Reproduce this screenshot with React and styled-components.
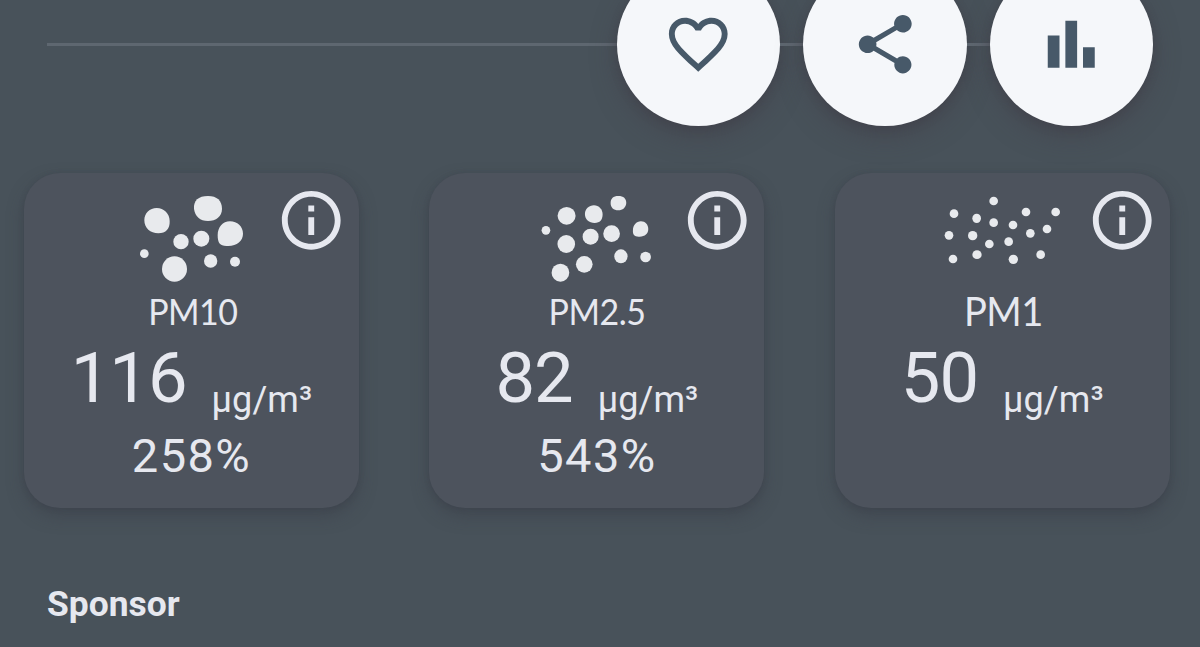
import { createGlobalStyle, styled } from 'styled-components'
import { MdFavoriteBorder, MdShare, MdBarChart, MdOutlineInfo } from 'react-icons/md'

const colors = {
  background: '#48525a',
  card: '#4d535d',
  text: '#e6e8ef',
  particle: '#e8eaed',
  line: '#5e6770',
  button: '#f5f7fa',
  buttonIcon: '#475969'
}

const GlobalStyle = createGlobalStyle`
  * {
    box-sizing: border-box;
  }
  body {
    margin: 0;
    background-color: ${colors.background};
    color: ${colors.text};
    font-family: Roboto, sans-serif;
  }
`

const StyledPage = styled.main`
  width: 1200px;
  height: 647px;
  overflow: hidden;
`

const ActionBar = styled.div`
  display: flex;
  align-items: center;
  height: 163px;
  margin-top: -37px;
  padding: 0 47px;
`

const Line = styled.div`
  flex: ${props => props.$width ? `0 0 ${props.$width}px` : 1};
  height: 3px;
  margin-bottom: 1px;
  background-color: ${colors.line};
`

const RoundButton = styled.button`
  display: flex;
  flex: none;
  align-items: center;
  justify-content: center;
  width: 163.5px;
  height: 163.5px;
  padding: 0;
  border: none;
  border-radius: 50%;
  background-color: ${colors.button};
  color: ${colors.buttonIcon};
  font-size: 70.5px;
  box-shadow: 0 10px 24px rgba(66, 62, 72, 0.5), 0 3px 8px rgba(60, 60, 68, 0.4);
`

const CardList = styled.div`
  display: flex;
  gap: 70.4px;
  padding: 47px 24px 0;
`

const Card = styled.section`
  flex: 0 0 335px;
  height: 335px;
  border-radius: 36px;
  background-color: ${colors.card};
  text-align: center;
  box-shadow: 0 8px 16px rgba(58, 62, 72, 0.5), 0 1px 5px rgba(58, 62, 72, 0.4);
`

const CardHeader = styled.div`
  display: flex;
  justify-content: flex-end;
  gap: 10.5px;
  height: 115px;
  padding: 12px 12.4px 0 0;
`

const ParticleBox = styled.svg`
  width: 136px;
  height: 100px;
  margin-top: 5px;
  fill: ${colors.particle};
`

const InfoIcon = styled(MdOutlineInfo)`
  width: 70.5px;
  height: 70.5px;
  color: ${colors.text};
`

const Name = styled.div`
  height: 45px;
  padding-left: ${props => props.$shift || 0}px;
  font-family: Lato, sans-serif;
  font-size: ${props => props.$large ? 41 : 37.5}px;
  line-height: 45px;
  letter-spacing: -0.5px;
  transform: scaleX(${props => props.$large ? 0.93 : 0.905});
`

const Reading = styled.div`
  display: flex;
  align-items: baseline;
  justify-content: center;
  height: 95px;
  line-height: 91px;
`

const Value = styled.span`
  font-size: 70.5px;
  letter-spacing: -1px;
`

const Unit = styled.span`
  margin-left: 25px;
  font-size: 36px;
  letter-spacing: 0.1px;
  transform: translateY(10px);
`

const Percent = styled.div`
  height: 56px;
  font-size: 47px;
  line-height: 56px;
  letter-spacing: 1.4px;
`

const SponsorTitle = styled.h2`
  margin: 74.5px 0 0 47px;
  font-size: 35.4px;
  font-weight: 700;
  line-height: 42px;
`

// [cx, cy, rx, ry]
const fineDots = [
  [194, 63, 13, 13], [75, 101, 13, 13], [143, 115, 13, 14], [291, 96, 13, 13],
  [380, 96, 13, 13], [194, 128, 13, 13], [252, 135, 13, 13], [60, 166, 13, 13],
  [131, 167, 14, 14], [304, 160, 13, 13], [354, 147, 13, 13], [181, 192, 13, 13],
  [239, 185, 13, 13], [72, 237, 13, 13], [144, 224, 14, 13], [253, 238, 14, 14],
  [335, 224, 13, 13]
]

const pollutants = [
  {
    name: 'PM10',
    value: 116,
    percent: 258,
    shift: 3,
    viewBox: '30 30 408 300',
    particles: <>
      <path d='M110 84C132 84 149 101 149 123C150 146 138 160 115 160C91 160 73 144 73 121C73 100 89 84 110 84Z' />
      <path d='M264 48C291 48 306 62 306 87C306 109 288 123 264 123C240 123 225 109 222 87C220 62 235 48 264 48Z' />
      <path d='M330 124C352 124 369 140 369 161C369 183 351 197 325 198C301 200 293 190 293 166C293 142 308 124 330 124Z' />
    </>,
    dots: [[163.5, 267, 37.5, 38], [183, 185, 23, 23], [244, 176, 24, 24], [73, 221, 13, 13], [272, 243, 20, 20], [345, 245, 15, 15]]
  },
  {
    name: 'PM2.5',
    value: 82,
    percent: 543,
    shift: 1,
    viewBox: '31.2 30 408 300',
    particles: <>
      <path d='M208 76C223 76 234 88 234 103C234 120 226 129 210 129C193 129 181 118 181 102C181 87 193 76 208 76Z' />
      <path d='M281 48C297 48 305 56 305 69C304 83 294 91 281 91C267 91 258 83 258 69C258 56 266 48 281 48Z' />
      <path d='M349 124C362 124 371 134 371 147C371 161 361 170 345 170C330 171 324 165 325 151C325 136 335 124 349 124Z' />
    </>,
    dots: [[126, 107.5, 27, 26.5], [107.5, 278, 26.5, 27], [64, 151, 13, 13], [125, 192, 26.5, 27], [198, 170, 24, 24], [261, 161, 25, 25], [179, 253, 25, 25], [289, 229, 20, 21], [363, 231, 16, 16]]
  },
  {
    name: 'PM1',
    value: 50,
    large: true,
    shift: 2,
    viewBox: '33 30 408 300',
    dots: fineDots
  }
]

const PollutantCard = ({ item }) => {
  return <Card>
    <CardHeader>
      <ParticleBox viewBox={item.viewBox}>
        {item.particles}
        {
          item.dots.map(([cx, cy, rx, ry], index) => (
            <ellipse cx={cx} cy={cy} rx={rx} ry={ry} key={index} />
          ))
        }
      </ParticleBox>
      <InfoIcon />
    </CardHeader>
    <Name $large={item.large} $shift={item.shift}>{item.name}</Name>
    <Reading>
      <Value>{item.value}</Value>
      <Unit>µg/m³</Unit>
    </Reading>
    {item.percent && <Percent>{item.percent}%</Percent>}
  </Card>
}

export default function App() {
  return <StyledPage>
    <GlobalStyle />
    <ActionBar>
      <Line />
      <RoundButton aria-label='Favorite'><MdFavoriteBorder /></RoundButton>
      <Line $width={23} />
      <RoundButton aria-label='Share'><MdShare /></RoundButton>
      <Line $width={23} />
      <RoundButton aria-label='Statistics'><MdBarChart /></RoundButton>
    </ActionBar>
    <CardList>
      {
        pollutants.map(item => <PollutantCard item={item} key={item.name} />)
      }
    </CardList>
    <SponsorTitle>Sponsor</SponsorTitle>
  </StyledPage>
}
